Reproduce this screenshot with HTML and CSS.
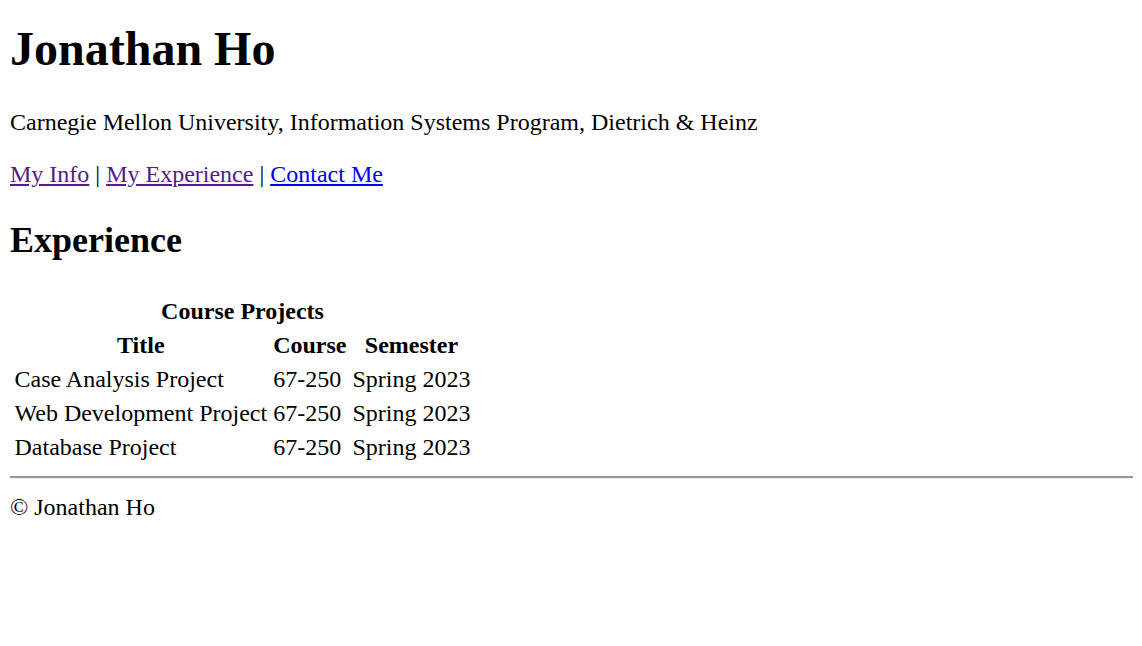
FILE: index.html
```html
<!DOCTYPE html>
<html>
<head>
<meta charset="utf-8">
<title>Jonathan Ho</title>
<link rel="stylesheet" href="styles.css">
</head>
<body class="page">
<header class="site-header">
<h1 class="name">Jonathan Ho</h1>
<p class="affil">Carnegie Mellon University, Information Systems Program, Dietrich &amp; Heinz</p>
<p class="nav"><a class="visited" href="#">My Info</a> | <a class="visited" href="#">My Experience</a> | <a class="link" href="#">Contact Me</a></p>
</header>
<main class="content">
<h2 class="section-title">Experience</h2>
<table class="projects">
<caption class="caption">Course Projects</caption>
<tr><th class="cell">Title</th><th class="cell">Course</th><th class="cell">Semester</th></tr>
<tr><td class="cell">Case Analysis Project</td><td class="cell">67-250</td><td class="cell">Spring 2023</td></tr>
<tr><td class="cell">Web Development Project</td><td class="cell">67-250</td><td class="cell">Spring 2023</td></tr>
<tr><td class="cell">Database Project</td><td class="cell">67-250</td><td class="cell">Spring 2023</td></tr>
</table>
</main>
<hr class="rule">
<footer class="foot">© Jonathan Ho</footer>
</body>
</html>
```

FILE: styles.css
```css
html, body {
  background: #fff;
}
.page {
  margin: 0 9px 0 10px;
  font-family: "Liberation Serif", "Times New Roman", serif;
  font-size: 24px;
  line-height: 28px;
  color: #000;
}
.name {
  font-size: 48px;
  line-height: normal;
  font-weight: bold;
  margin: 21px 0 32px;
}
.affil {
  margin: 24px 0;
}
.nav {
  margin: 24px 0;
}
.visited {
  color: #551a8b;
  text-decoration: underline;
}
.link {
  color: #0000ee;
  text-decoration: underline;
}
.section-title {
  font-size: 36px;
  line-height: normal;
  font-weight: bold;
  margin: 31px 0 36px;
}
.projects {
  border-collapse: separate;
  border-spacing: 3px;
  margin-left: 0;
}
.caption {
  font-weight: bold;
  text-align: center;
  padding-bottom: 1px;
}
.cell {
  padding: 1.5px;
  text-align: left;
  white-space: nowrap;
}
th.cell {
  text-align: center;
  font-weight: bold;
}
.rule {
  margin: 11px 0 12px;
  border: none;
  border-top: 2px solid #999;
  border-bottom: 1px solid #eee;
  height: 0;
}
.foot {
  margin-top: 14px;
}
```
